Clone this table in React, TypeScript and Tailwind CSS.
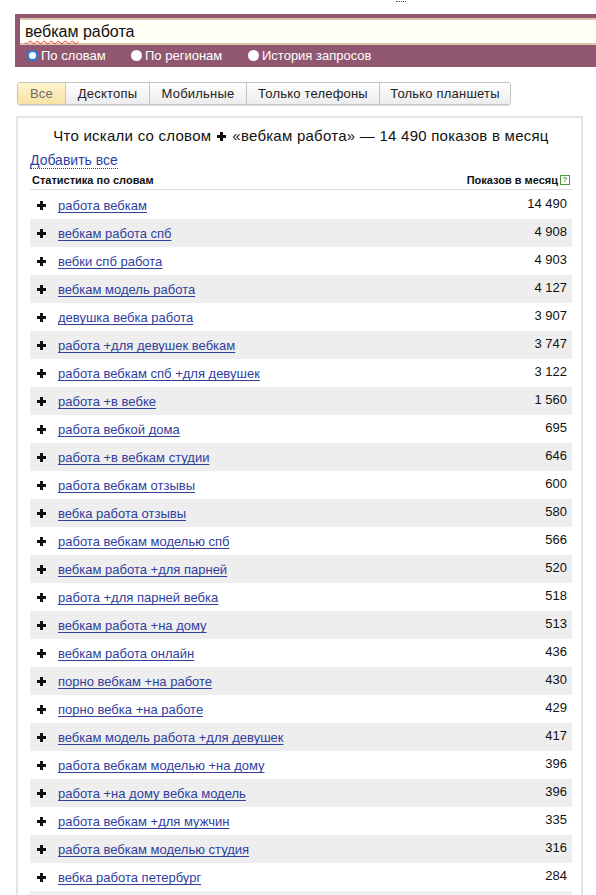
import React from 'react'

const rows: [string, string][] = [
  ['работа вебкам', '14 490'],
  ['вебкам работа спб', '4 908'],
  ['вебки спб работа', '4 903'],
  ['вебкам модель работа', '4 127'],
  ['девушка вебка работа', '3 907'],
  ['работа +для девушек вебкам', '3 747'],
  ['работа вебкам спб +для девушек', '3 122'],
  ['работа +в вебке', '1 560'],
  ['работа вебкой дома', '695'],
  ['работа +в вебкам студии', '646'],
  ['работа вебкам отзывы', '600'],
  ['вебка работа отзывы', '580'],
  ['работа вебкам моделью спб', '566'],
  ['вебкам работа +для парней', '520'],
  ['работа +для парней вебка', '518'],
  ['вебкам работа +на дому', '513'],
  ['вебкам работа онлайн', '436'],
  ['порно вебкам +на работе', '430'],
  ['порно вебка +на работе', '429'],
  ['вебкам модель работа +для девушек', '417'],
  ['работа вебкам моделью +на дому', '396'],
  ['работа +на дому вебка модель', '396'],
  ['работа вебкам +для мужчин', '335'],
  ['работа вебкам моделью студия', '316'],
  ['вебка работа петербург', '284'],
]

const tabs: [string, string][] = [
  ['Все', 'w-[47px]'],
  ['Десктопы', 'w-[84px]'],
  ['Мобильные', 'w-[97px]'],
  ['Только телефоны', 'w-[133px]'],
  ['Только планшеты', 'w-[131px]'],
]

function Plus({ size = 9 }: { size?: number }) {
  return (
    <svg width={size} height={size} viewBox="0 0 9 9" className="shrink-0">
      <rect x="3" y="0" width="3" height="9" fill="#111" />
      <rect x="0" y="3" width="9" height="3" fill="#111" />
    </svg>
  )
}

function Radio({ checked, label }: { checked?: boolean; label: string }) {
  return (
    <label className="flex items-center gap-[3px]">
      {checked ? (
        <span className="w-[11px] h-[11px] rounded-full border-[2px] border-[#1e7fe6] bg-white" />
      ) : (
        <span className="w-[11px] h-[11px] rounded-full bg-white" />
      )}
      <span className="text-[13px] text-white">{label}</span>
    </label>
  )
}

export default function App() {
  return (
    <div className="w-[596px] h-[895px] overflow-hidden bg-white font-['Liberation_Sans',Arial,sans-serif]">
      {/* cut-off link above */}
      <div className="h-[14px]">
        <div className="ml-[396px] w-[10px] h-[2px] border-b border-dotted border-[#2b3fa6]" />
      </div>

      {/* search band */}
      <div className="ml-[15px] h-[53px] bg-[#915770] pt-[4px]">
        <div className="ml-[5px] h-[27px] border-y-[2px] border-[#d9c7a9] bg-[#fffef7] flex items-center pl-[5px]">
          <span className="text-[16px] text-[#111]">
            <span className="underline decoration-wavy decoration-[#e33] decoration-1 underline-offset-[3px]">вебкам</span> работа
          </span>
        </div>
        <div className="flex items-center h-[21px] pl-[12px]">
          <div className="w-[104px]"><Radio checked label="По словам" /></div>
          <div className="w-[117px]"><Radio label="По регионам" /></div>
          <Radio label="История запросов" />
        </div>
      </div>

      {/* tabs */}
      <div className="mt-[15px] ml-[17px] flex h-[23px] w-fit rounded-[3px] border border-[#c4c4c4] shadow-[0_1px_1px_rgba(0,0,0,0.15)] overflow-hidden">
        {tabs.map(([t, w], i) => (
          <div
            key={t}
            className={
              w +
              ' flex items-center justify-center text-[13px] tracking-[0.2px] ' +
              (i > 0 ? 'border-l border-[#c4c4c4] ' : '') +
              (i === 0
                ? 'bg-gradient-to-b from-[#fff4cf] to-[#f9e3a3] text-[#6b6b6b]'
                : 'bg-gradient-to-b from-white to-[#ececec] text-[#222]')
            }
          >
            {t}
          </div>
        ))}
      </div>

      {/* results card */}
      <div className="mt-[11px] ml-[16px] w-[567px] border-2 border-[#e4e4e4] pl-[12px] pr-[9px] pt-[8px]">
        <div className="flex items-center justify-center gap-[6px] text-[15px] tracking-[0.25px] text-[#111] h-[20px]">
          <span>Что искали со словом</span>
          <Plus size={9} />
          <span>«вебкам работа» — 14 490 показов в месяц</span>
        </div>
        <div className="mt-[2px] h-[19px]">
          <span className="text-[14px] text-[#2b3fa6] border-b border-dotted border-[#2b3fa6]">Добавить все</span>
        </div>
        <div className="mt-[5px] h-[18px] flex items-center justify-between border-b border-[#dcdcdc] pl-[2px] pr-[2px] pb-[1px]">
          <span className="text-[11px] font-bold text-[#111]">Статистика по словам</span>
          <span className="flex items-center gap-[2px]">
            <span className="text-[11px] font-bold text-[#111]">Показов в месяц</span>
            <span className="w-[10px] h-[10px] border border-[#4d9a3a] text-[8px] leading-[8px] font-bold text-[#4d9a3a] flex items-center justify-center">?</span>
          </span>
        </div>
        <div className="mt-[1px]">
          {rows.map(([phrase, count], i) => (
            <div
              key={phrase}
              className={'h-[28px] flex items-center pl-[7px] pr-[5px] ' + (i % 2 === 1 ? 'bg-[#eeeeee]' : 'bg-white')}
            >
              <Plus />
              <a className="ml-[12px] text-[13px] text-[#2f3f9f] underline underline-offset-[2px] pt-[2px]">{phrase}</a>
              <span className="ml-auto text-[13px] text-[#111] pb-[3px]">{count}</span>
            </div>
          ))}
          <div className="h-[28px] bg-[#eeeeee]" />
        </div>
      </div>
    </div>
  )
}
